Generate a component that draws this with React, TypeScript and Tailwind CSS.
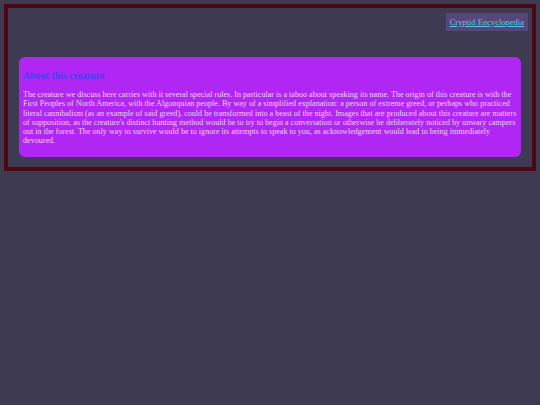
import React from "react";

export default function App() {
  return (
    <div className="min-h-[405px] w-full bg-[#3e3a52] pt-[4px] px-[4px] pb-[4px]" style={{ fontFamily: '"Liberation Serif", "Times New Roman", serif' }}>
      <div className="border-[4px] border-[#4a0810] flex flex-col">
        <div className="flex justify-end pt-[5px] pr-[4px]">
          <div className="bg-[#55477a] px-[4px] h-[18px] flex items-center">
            <a href="#" className="text-[8.5px] text-[#56c8e2] underline leading-none">Cryptid Encyclopedia</a>
          </div>
        </div>
        <div className="mx-[11px] mt-[26px] mb-[10px] rounded-[6px] bg-[#b027f3] px-[4px] pt-[13px] pb-[11px]">
          <h3 className="text-[9.8px] font-bold text-[#4a3ef0] leading-[11px]">About this creature</h3>
          <p className="mt-[9px] text-[8.1px] leading-[9.3px] text-[#f3d0f3]">
            The creature we discuss here carries with it several special rules. In particular is a taboo about speaking its name. The origin of this creature is with the First Peoples of North America, with the Algonquian people. By way of a simplified explanation: a person of extreme greed, or perhaps who practiced literal cannibalism (as an example of said greed), could be transformed into a beast of the night. Images that are produced about this creature are matters of supposition, as the creature's distinct hunting method would be to try to begin a conversation or otherwise be deliberately noticed by unwary campers out in the forest. The only way to survive would be to ignore its attempts to speak to you, as acknowledgement would lead to being immediately devoured.
          </p>
        </div>
      </div>
    </div>
  );
}
